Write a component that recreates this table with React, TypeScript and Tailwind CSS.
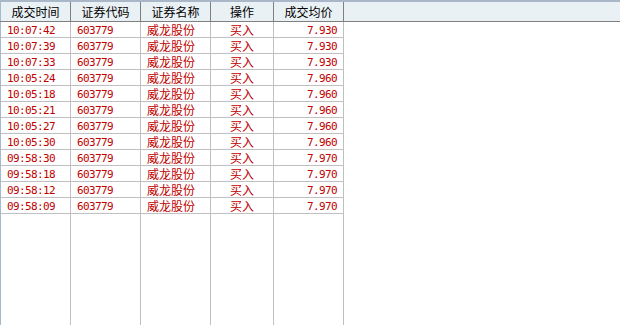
import React from "react";

type Trade = { time: string; code: string; name: string; side: string; price: string };

const trades: Trade[] = [
  ["10:07:42", "7.930"],
  ["10:07:39", "7.930"],
  ["10:07:33", "7.930"],
  ["10:05:24", "7.960"],
  ["10:05:18", "7.960"],
  ["10:05:21", "7.960"],
  ["10:05:27", "7.960"],
  ["10:05:30", "7.960"],
  ["09:58:30", "7.970"],
  ["09:58:18", "7.970"],
  ["09:58:12", "7.970"],
  ["09:58:09", "7.970"],
].map(([time, price]) => ({ time, code: "603779", name: "威龙股份", side: "买入", price }));

const cjk = "font-['SimSun','Noto_Sans_CJK_SC',sans-serif]";
const mono = "font-['DejaVu_Sans_Mono',monospace] text-[11px] tracking-[-0.62px] pt-[2px] font-light";

type Col = {
  title: string;
  width: string;
  align: string;
  font: string;
  value: (t: Trade) => string;
};

const columns: Col[] = [
  { title: "成交时间", width: "w-[71px] border-l border-l-[#a6b8cc]", align: "justify-start pl-[6px]", font: mono, value: (t) => t.time },
  { title: "证券代码", width: "w-[70px]", align: "justify-start pl-[6px]", font: mono, value: (t) => t.code },
  { title: "证券名称", width: "w-[70px]", align: "justify-start pl-[6px]", font: `${cjk} text-[12px] pt-[1px]`, value: (t) => t.name },
  { title: "操作", width: "w-[63px]", align: "justify-center", font: `${cjk} text-[12px] pt-[1px]`, value: (t) => t.side },
  { title: "成交均价", width: "w-[70px]", align: "justify-end pr-[6px]", font: mono, value: (t) => t.price },
];

export default function App() {
  return (
    <div className="w-[620px] h-[325px] bg-white overflow-hidden flex flex-col">
      {/* column headings */}
      <div className="h-[22px] flex bg-[#eaf1f5] border-t-2 border-t-[#a9b7c8] border-b border-b-[#7f7f7f] shrink-0">
        {columns.map((c) => (
          <div
            key={c.title}
            className={`${c.width} h-full flex items-center justify-center pt-[1px] border-r border-r-[#7f7f7f] text-[12px] text-black leading-none ${cjk}`}
          >
            {c.title}
          </div>
        ))}
        <div className="flex-1" />
      </div>

      {/* trade rows, one column at a time so the grid lines run to the bottom */}
      <div className="flex flex-1">
        {columns.map((c) => (
          <div key={c.title} className={`${c.width} h-full border-r border-r-[#c0c0c0] flex flex-col`}>
            {trades.map((t, i) => (
              <div
                key={i}
                className={`h-[16px] border-b border-b-[#c0c0c0] flex items-center ${c.align} text-[#c00000] leading-none ${c.font}`}
              >
                {c.value(t)}
              </div>
            ))}
          </div>
        ))}
        <div className="flex-1" />
      </div>
    </div>
  );
}
